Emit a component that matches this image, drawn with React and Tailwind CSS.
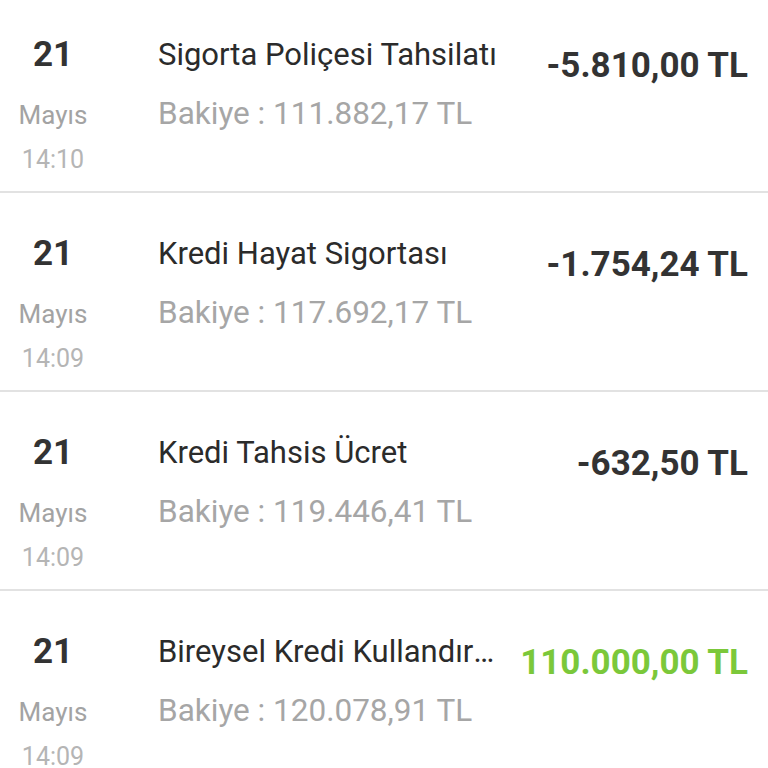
import React from 'react';

const rows = [
  { day: '21', month: 'Mayıs', time: '14:10', title: 'Sigorta Poliçesi Tahsilatı', balance: 'Bakiye : 111.882,17 TL', amount: '-5.810,00 TL', positive: false },
  { day: '21', month: 'Mayıs', time: '14:09', title: 'Kredi Hayat Sigortası', balance: 'Bakiye : 117.692,17 TL', amount: '-1.754,24 TL', positive: false },
  { day: '21', month: 'Mayıs', time: '14:09', title: 'Kredi Tahsis Ücret', balance: 'Bakiye : 119.446,41 TL', amount: '-632,50 TL', positive: false },
  { day: '21', month: 'Mayıs', time: '14:09', title: 'Bireysel Kredi Kullandırım', balance: 'Bakiye : 120.078,91 TL', amount: '110.000,00 TL', positive: true },
];

const Row = ({ row }) => (
  <div className="flex pt-[41px] pb-[11px] border-b-2 border-[#e2e2e2]">
    <div className="w-[106px] shrink-0 flex flex-col items-center">
      <div className="text-[35px] leading-[40px] font-bold text-[#333333]">{row.day}</div>
      <div className="mt-[20px] text-[26px] leading-[40px] text-[#a3a3a3]">{row.month}</div>
      <div className="mt-[5px] text-[25px] leading-[40px] text-[#b5b5b5]">{row.time}</div>
    </div>
    <div className="ml-[52px] min-w-0 flex-1 flex flex-col">
      <div className="max-w-[341px] text-[31px] leading-[40px] text-[#2b2b2b] truncate">{row.title}</div>
      <div className="mt-[19px] text-[31.5px] leading-[40px] text-[#a6a6a6] whitespace-nowrap">{row.balance}</div>
    </div>
    <div
      className={
        'ml-3 mr-[20px] mt-[11px] shrink-0 text-[35px] leading-[40px] font-bold ' +
        (row.positive ? 'text-[#7bc83a]' : 'text-[#333333]')
      }
    >
      {row.amount}
    </div>
  </div>
);

export default function App() {
  return (
    <div className="w-[768px] h-[768px] overflow-hidden bg-white" style={{ fontFamily: 'Roboto, "Noto Sans", sans-serif' }}>
      <div className="-mt-[6px]">
        {rows.map((row, i) => (
          <Row key={i} row={row} />
        ))}
      </div>
    </div>
  );
}
